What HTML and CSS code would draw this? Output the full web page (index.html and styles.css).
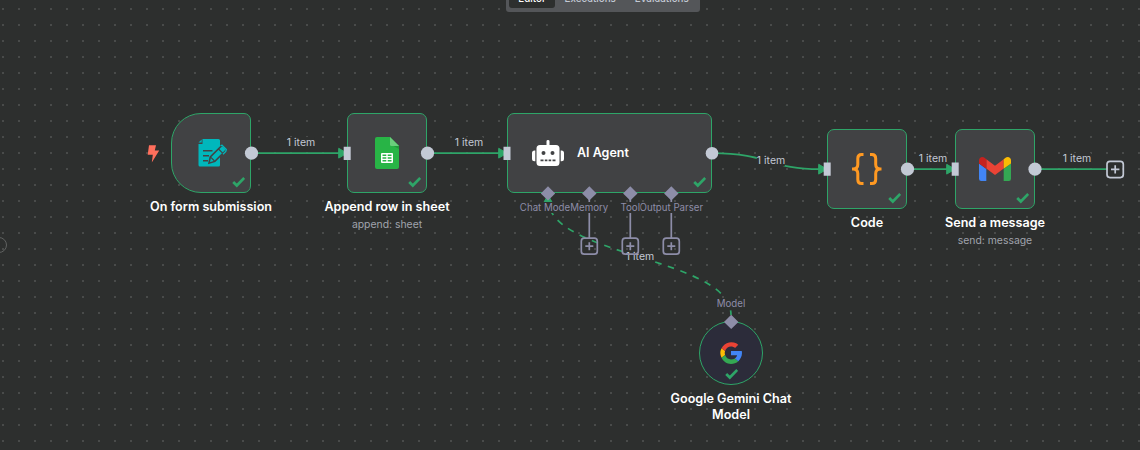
FILE: index.html
```html
<!DOCTYPE html>
<html lang="en">
<head>
<meta charset="utf-8">
<title>Workflow editor</title>
<link rel="stylesheet" href="styles.css">
</head>
<body>
<main class="canvas">
  <svg class="edges" width="1140" height="450" viewBox="0 0 1140 450">
    <defs>
      <path id="check" d="M1.200 6 4.800 9.500 12.200 2" fill="none" stroke="#2ea568" stroke-width="2.700"/>
    </defs>
    <g class="wire">
      <path d="M251 153.200H340"/>
      <path d="M427 153.200H500"/>
      <path d="M712 153.200C769.500 153.200 769.500 169.200 820 169.200"/>
      <path d="M907 169.200H948"/>
      <path d="M1035 169.200H1107"/>
      <path class="dashed" d="M731 315C731 257 548 257 548 199"/>
    </g>
    <g class="arrow">
      <path d="M338.700 148.300 347 153.200 338.700 158.100Z"/>
      <path d="M498.700 148.300 507 153.200 498.700 158.100Z"/>
      <path d="M818.700 164.300 827 169.200 818.700 174.100Z"/>
      <path d="M946.700 164.300 955 169.200 946.700 174.100Z"/>
      <path d="M543.500 203 548 195 552.500 203Z"/>
    </g>
    <g class="stub">
      <path d="M589.300 193V238M630.300 193V238M671.300 193V238"/>
    </g>
  </svg>

  <nav class="tabs"><span class="tab active">Editor</span><span class="tab">Executions</span><span class="tab">Evaluations</span></nav>
  <i class="side-handle"></i>

  <span class="items i1">1 item</span>
  <span class="items i2">1 item</span>
  <span class="items i3">1 item</span>
  <span class="items i4">1 item</span>
  <span class="items i5">1 item</span>
  <span class="items i6">1 item</span>

  <svg class="bolt" width="13" height="18" viewBox="0 0 13 18"><path d="M2 .2H9L7.800 5.600H12.200L4.800 17.500 5.800 9.800H.7Z" fill="#ff6f5c"/></svg>

  <section class="node trigger">
    <svg class="icon" width="30" height="30" viewBox="0 0 30 30">
      <path d="M5.500 1H21.500Q23 1 23 2.500V27Q23 28.500 21.500 28.500H3Q1.500 28.500 1.500 27V6H5.500Z" fill="#00b7bc"/>
      <path d="M1.500 4.600 4.700 1.400V4.600Z" fill="#00b7bc"/>
      <path d="M6 12.700H15.500M6 17.700H12M6 22.700H11" stroke="#414244" stroke-width="1.600"/>
      <path d="M12 25.200 13.300 19 23.600 8.700Q25.300 7 27 8.700L28.300 10Q29.700 11.500 28.200 13L17.900 23.400Z" fill="#00b7bc" stroke="#414244" stroke-width="1.600"/>
      <path d="M21.500 11 25.900 15.300M13.900 19.300 17.500 23" stroke="#414244" stroke-width="1.100"/>
      <path d="M23.500 7.600 25 7.300 29.300 11.500 28.800 13.500 26 16.300" fill="none" stroke="#00b7bc" stroke-width="1.300"/>
    </svg>
    <svg class="check" width="13" height="12"><use href="#check"/></svg>
  </section>
  <div class="caption c-trigger"><b>On form submission</b></div>

  <section class="node sheet">
    <svg class="icon" width="24" height="32" viewBox="0 0 24 32">
      <path d="M2 0H15L24 9V30Q24 32 22 32H2Q0 32 0 30V2Q0 0 2 0Z" fill="#28b446"/>
      <path d="M15 7 24 12V9L22 7Z" fill="#219b3a"/>
      <path d="M15 0 24 9H16.500Q15 9 15 7.500Z" fill="#6ace7c"/>
      <path d="M7 16H17Q18 16 18 17V25Q18 26 17 26H7Q6 26 6 25V17Q6 16 7 16ZM7.500 17.500V19H11.300V17.500ZM12.700 17.500V19H16.500V17.500ZM7.500 20.300V21.700H11.300V20.300ZM12.700 20.300V21.700H16.500V20.300ZM7.500 23V24.500H11.300V23ZM12.700 23V24.500H16.500V23Z" fill="#fff" fill-rule="evenodd"/>
    </svg>
    <svg class="check" width="13" height="12"><use href="#check"/></svg>
  </section>
  <div class="caption c-sheet"><b>Append row in sheet</b><span>append: sheet</span></div>

  <section class="node agent">
    <svg class="robot" width="32" height="26" viewBox="0 0 32 26">
      <path d="M14.500 1.300Q14.500 0 16 0T17.500 1.300V5H24Q27.500 5 27.500 8.500V22.500Q27.500 26 24 26H8Q4.500 26 4.500 22.500V8.500Q4.500 5 8 5H14.500ZM11.500 11A2 2 0 1 0 11.500 15 2 2 0 1 0 11.500 11ZM20.500 11A2 2 0 1 0 20.500 15 2 2 0 1 0 20.500 11ZM8.500 19.500V21.300H11.500V19.500ZM12.800 19.500V21.300H15.400V19.500ZM16.600 19.500V21.300H19.200V19.500ZM20.500 19.500V21.300H23.500V19.500Z" fill="#fff" fill-rule="evenodd"/>
      <path d="M3.300 10.500V21.200H2.500Q0 21.200 0 18.700V13Q0 10.500 2.500 10.500ZM28.700 10.500V21.200H29.500Q32 21.200 32 18.700V13Q32 10.500 29.500 10.500Z" fill="#fff"/>
    </svg>
    <b>AI Agent</b>
    <svg class="check" width="13" height="12"><use href="#check"/></svg>
  </section>

  <section class="node code">
    <svg class="icon" width="32" height="32" viewBox="0 0 32 32" fill="none" stroke="#ff9922" stroke-width="3">
      <path d="M12.500 1.500H10.500Q6.800 1.500 6.800 5.500V11.500Q6.800 16 2 16H1 2Q6.800 16 6.800 20.500V26.500Q6.800 30.500 10.500 30.500H12.500"/>
      <path d="M19 1.500H21Q24.700 1.500 24.700 5.500V11.500Q24.700 16 29.500 16H30.500 29.500Q24.700 16 24.700 20.500V26.500Q24.700 30.500 21 30.500H19"/>
    </svg>
    <svg class="check" width="13" height="12"><use href="#check"/></svg>
  </section>
  <div class="caption c-code"><b>Code</b></div>

  <section class="node mail">
    <svg class="icon" width="32" height="24" viewBox="0 0 32 24">
      <path d="M0 6.500 7.300 12V24H2.200Q0 24 0 21.800Z" fill="#4285f4"/>
      <path d="M24.700 12 32 6.500V21.800Q32 24 29.800 24H24.700Z" fill="#34a853"/>
      <path d="M7.300 2.200 16 8.800 24.700 2.200V11.500L16 18 7.300 11.500Z" fill="#ea4335"/>
      <path d="M0 3.300C0 .3 3.300-1 5.800.9L7.300 2.200V11.800L0 6.500Z" fill="#c5221f"/>
      <path d="M32 3.300C32 .3 28.700-1 26.200.9L24.700 2.200V11.800L32 6.500Z" fill="#fbbc04"/>
    </svg>
    <svg class="check" width="13" height="12"><use href="#check"/></svg>
  </section>
  <div class="caption c-mail"><b>Send a message</b><span>send: message</span></div>

  <section class="node gemini">
    <svg class="icon" width="22" height="22" viewBox="2 2 44 44">
      <path fill="#fbbc05" d="M11.500 24c0-1.400.2-2.800.7-4.100L5 14.300A22 22 0 0 0 5 33.700l7.200-5.600A13 13 0 0 1 11.500 24Z"/>
      <path fill="#ea4335" d="M24 11c3.100 0 5.900 1.100 8.100 2.900l6.400-6.400A22 22 0 0 0 5 14.300l7.200 5.600C13.800 14.700 18.500 11 24 11Z"/>
      <path fill="#34a853" d="M24 37c-5.500 0-10.200-3.700-11.800-8.900L5 33.700C8.500 41 15.700 46 24 46c5.500 0 10.700-1.900 14.600-5.600l-6.800-5.300C29.900 36.300 27.300 37 24 37Z"/>
      <path fill="#4285f4" d="M45.500 20H24v8.700h12.200c-.6 2.800-2.200 5-4.400 6.400l6.800 5.300C42.800 36.500 46 30.700 46 24c0-1.300-.2-2.700-.5-4Z"/>
    </svg>
    <svg class="check" width="13" height="12"><use href="#check"/></svg>
  </section>
  <div class="caption c-gemini"><b>Google Gemini Chat<br>Model</b></div>

  <span class="port p-chat">Chat Mode</span>
  <span class="port p-memory">Memory</span>
  <span class="port p-parser">Output Parser</span>
  <span class="port p-tool">Tool</span>
  <span class="port p-model">Model</span>

  <svg class="edges" width="1140" height="450" viewBox="0 0 1140 450">
    <g fill="#c3c9d5">
      <circle cx="251.500" cy="153.200" r="6.600"/>
      <circle cx="427.500" cy="153.200" r="6.600"/>
      <circle cx="712" cy="153.200" r="6.300"/>
      <circle cx="907.500" cy="169.200" r="6.600"/>
      <circle cx="1035" cy="169.200" r="6.600"/>
      <path d="M343.700 146.700h7v13.300h-7zM503.500 146.700h7v13.300h-7zM823.700 162.500h7v13.300h-7zM951.700 162.500h7v13.300h-7z"/>
    </g>
    <g fill="#8d8da8">
      <path d="M548 186.200l7.200 7.200-7.200 7.200-7.200-7.200zM589.300 186.200l7.200 7.200-7.200 7.200-7.200-7.200zM630.300 186.200l7.200 7.200-7.200 7.200-7.200-7.200zM671.300 186.200l7.200 7.200-7.200 7.200-7.200-7.200zM731.200 314.700l7.200 7.200-7.200 7.200-7.200-7.200z"/>
    </g>
    <g class="add">
      <path d="M585.300 246.200h8M589.300 242.200v8M626.300 246.200h8M630.300 242.200v8M667.300 246.200h8M671.300 242.200v8"/>
      <rect x="581.300" y="238.200" width="16" height="16" rx="3"/>
      <rect x="622.300" y="238.200" width="16" height="16" rx="3"/>
      <rect x="663.300" y="238.200" width="16" height="16" rx="3"/>
    </g>
    <g class="add light">
      <rect x="1107" y="161.300" width="16.300" height="16.300" rx="3"/>
      <path d="M1111 169.400h8.400M1115.200 165.200v8.400"/>
    </g>
  </svg>
</main>
</body>
</html>
```
FILE: styles.css
```css
body { margin: 0; }

.canvas {
  position: relative;
  width: 1140px;
  height: 450px;
  overflow: hidden;
  font-family: Inter, "Liberation Sans", sans-serif;
  background-color: #2d2f2e;
  background-image: conic-gradient(from 0deg at 2px 2px, transparent 75%, #494b4a 0);
  background-size: 16px 16px;
  background-position: 2px 8px;
}

.edges { position: absolute; inset: 0; }
.wire { fill: none; stroke: #2ea568; stroke-width: 1.7; }
.dashed { stroke-dasharray: 6.67 6.67; stroke-dashoffset: 2; }
.arrow { fill: #2ea568; stroke: #2ea568; stroke-width: 1; stroke-linejoin: round; }
.stub { stroke: #8d8da8; stroke-width: 1.7; }
.add { fill: none; stroke: #8d8da8; stroke-width: 1.7; }
.add.light { stroke: #c3c9d5; }

.tabs {
  position: absolute;
  left: 506px;
  top: -14px;
  box-sizing: border-box;
  width: 194px;
  height: 26px;
  padding: 3px;
  display: flex;
  border-radius: 3px;
  background: #545659;
  color: #c3c9d5;
  font-size: 9.8px;
  font-weight: 500;
}
.tab { box-sizing: border-box; display: flex; align-items: center; height: 19px; padding: 0 9.5px 1px; border-radius: 3px; }
.tab.active { width: 46px; justify-content: center; background: #2d2f2e; color: #fff; }

.side-handle {
  position: absolute;
  left: -9px;
  top: 237px;
  width: 14px;
  height: 14px;
  border: 1px solid #606261;
  border-radius: 50%;
}

.bolt { position: absolute; left: 147px; top: 145px; }

.node {
  position: absolute;
  box-sizing: border-box;
  width: 80px;
  height: 80px;
  display: flex;
  align-items: center;
  justify-content: center;
  border: 1.5px solid #2ea568;
  border-radius: 7px;
  background: #414244;
}
.check { position: absolute; right: 5px; bottom: 4px; }
.trigger { left: 171px; top: 113px; border-radius: 30px 7px 7px 30px; }
.trigger .icon { margin-left: 2px; }
.sheet { left: 347px; top: 113px; }
.agent { left: 507px; top: 113px; width: 205px; justify-content: flex-start; gap: 13px; padding-left: 24px; color: #fff; font-size: 12.5px; }
.agent b { padding-bottom: 2px; font-weight: 600; }
.code { left: 827px; top: 129px; }
.mail { left: 955px; top: 129px; }
.gemini { left: 699px; top: 321px; width: 64px; height: 64px; border-radius: 50%; background: #2c2c3a; }
.gemini .check { right: 24px; bottom: 4px; }

.caption {
  position: absolute;
  width: 160px;
  display: flex;
  flex-direction: column;
  align-items: center;
  text-align: center;
  white-space: nowrap;
  color: #fff;
  font-size: 12.6px;
  line-height: 16px;
}
.caption b { font-weight: 600; }
.caption span { margin-top: 2px; color: #a0a4ad; font-size: 10.4px; }
.c-trigger { left: 131px; top: 199px; }
.c-sheet { left: 307px; top: 199px; }
.c-code { left: 787px; top: 215px; }
.c-mail { left: 915px; top: 215px; }
.c-gemini { left: 651px; top: 391px; }

.items, .port {
  position: absolute;
  transform: translateX(-50%);
  white-space: nowrap;
  line-height: 11px;
  background: #2d2f2e;
}
.items { color: #c3c9d5; font-size: 10.5px; }
.i1 { left: 301px; top: 137px; }
.i2 { left: 469px; top: 137px; }
.i3 { left: 771px; top: 155px; }
.i4 { left: 933px; top: 153px; }
.i5 { left: 1077px; top: 153px; }
.i6 { left: 640px; top: 251px; }
.port { color: #8d8da8; font-size: 9.7px; }
.p-chat { left: 545px; top: 202px; }
.p-memory { left: 589.3px; top: 202px; }
.p-tool { left: 630.3px; top: 202px; }
.p-parser { left: 671.3px; top: 202px; }
.p-model { left: 731px; top: 298px; }
```
